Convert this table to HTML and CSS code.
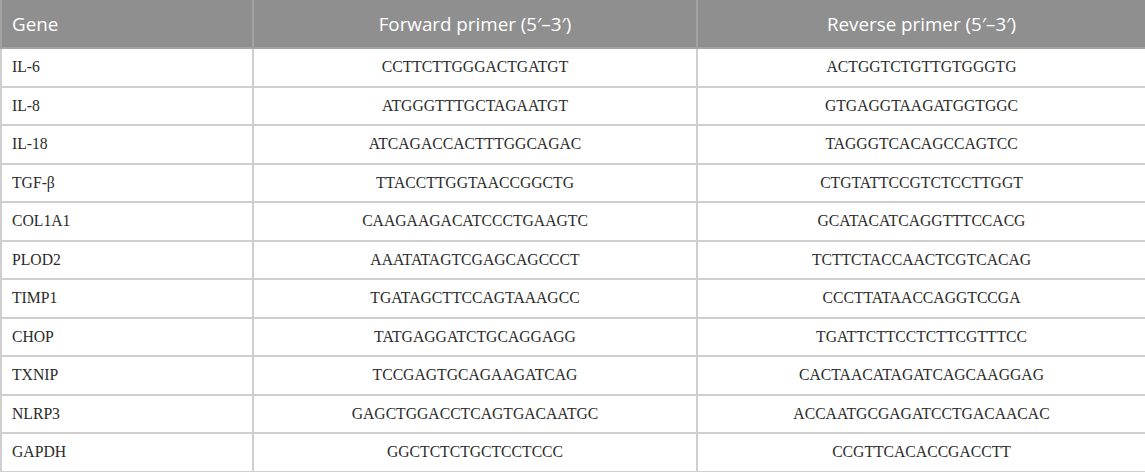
FILE: index.html
```html
<!DOCTYPE html>
<html>
<head>
<meta charset="utf-8">
<link rel="stylesheet" href="styles.css">
</head>
<body>
<table class="primers">
  <colgroup>
    <col class="c-gene">
    <col class="c-fwd">
    <col class="c-rev">
  </colgroup>
  <thead>
    <tr>
      <th class="left">Gene</th>
      <th>Forward primer (5′–3′)</th>
      <th>Reverse primer (5′–3′)</th>
    </tr>
  </thead>
  <tbody>
    <tr><td class="left">IL-6</td><td>CCTTCTTGGGACTGATGT</td><td>ACTGGTCTGTTGTGGGTG</td></tr>
    <tr><td class="left">IL-8</td><td>ATGGGTTTGCTAGAATGT</td><td>GTGAGGTAAGATGGTGGC</td></tr>
    <tr><td class="left">IL-18</td><td>ATCAGACCACTTTGGCAGAC</td><td>TAGGGTCACAGCCAGTCC</td></tr>
    <tr><td class="left">TGF-β</td><td>TTACCTTGGTAACCGGCTG</td><td>CTGTATTCCGTCTCCTTGGT</td></tr>
    <tr><td class="left">COL1A1</td><td>CAAGAAGACATCCCTGAAGTC</td><td>GCATACATCAGGTTTCCACG</td></tr>
    <tr><td class="left">PLOD2</td><td>AAATATAGTCGAGCAGCCCT</td><td>TCTTCTACCAACTCGTCACAG</td></tr>
    <tr><td class="left">TIMP1</td><td>TGATAGCTTCCAGTAAAGCC</td><td>CCCTTATAACCAGGTCCGA</td></tr>
    <tr><td class="left">CHOP</td><td>TATGAGGATCTGCAGGAGG</td><td>TGATTCTTCCTCTTCGTTTCC</td></tr>
    <tr><td class="left">TXNIP</td><td>TCCGAGTGCAGAAGATCAG</td><td>CACTAACATAGATCAGCAAGGAG</td></tr>
    <tr><td class="left">NLRP3</td><td>GAGCTGGACCTCAGTGACAATGC</td><td>ACCAATGCGAGATCCTGACAACAC</td></tr>
    <tr><td class="left">GAPDH</td><td>GGCTCTCTGCTCCTCCC</td><td>CCGTTCACACCGACCTT</td></tr>
  </tbody>
</table>
</body>
</html>
```
FILE: styles.css
```css
html, body {
  margin: 0;
  padding: 0;
  background: #ffffff;
}

.primers {
  width: 1145px;
  border-collapse: collapse;
  table-layout: fixed;
}

.c-gene { width: 252px; }
.c-fwd { width: 444px; }
.c-rev { width: 449px; }

.primers th {
  background: #8f8f8f;
  color: #ffffff;
  font-family: "Open Sans", "Noto Sans", sans-serif;
  font-weight: 400;
  font-size: 18.8px;
  height: 48px;
  padding: 0 10px;
  text-align: center;
  border: 2px solid #a3a3a3;
  border-top: none;
  box-sizing: border-box;
}

.primers td {
  font-family: "Liberation Serif", "Times New Roman", serif;
  font-size: 15.7px;
  color: #2b2b2b;
  height: 38.5px;
  padding: 0 10px;
  text-align: center;
  border: 2px solid #cfcfcf;
  box-sizing: border-box;
}

.primers .left {
  text-align: left;
}
```
